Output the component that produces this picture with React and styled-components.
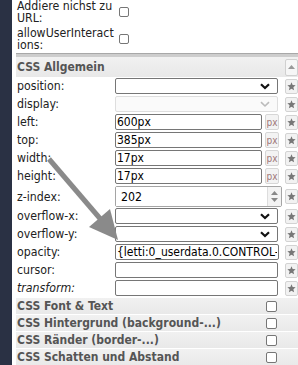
import React from 'react';
import styled, { createGlobalStyle } from 'styled-components';

const GlobalStyle = createGlobalStyle`
  html, body { margin: 0; padding: 0; background: #fff; overflow: hidden; }
  body {
    font-family: "DejaVu Sans Condensed", "DejaVu Sans", sans-serif;
    font-size: 12.25px;
    color: #222;
  }
`;

function Star() {
    return (
        <svg width="9" height="9" viewBox="0 0 10 10">
            <path d="M5 0.4 L6.3 3.4 L9.6 3.7 L7.1 5.9 L7.9 9.3 L5 7.5 L2.1 9.3 L2.9 5.9 L0.4 3.7 L3.7 3.4 Z" fill="#777" />
        </svg>
    );
}

function Chevron({ light }) {
    return (
        <svg width="10" height="7" viewBox="0 0 10 7">
            <path d="M1 1.2 L5 5 L9 1.2" fill="none" stroke={light ? '#bbb' : '#111'} strokeWidth={light ? 1.6 : 2.2} />
        </svg>
    );
}

function Select({ disabled }) {
    return (
        <SelectBox $disabled={disabled}>
            <Chevron light={disabled} />
        </SelectBox>
    );
}

function PropRow({ label, italic, children, tall }) {
    return (
        <Row $tall={tall}>
            <PropLabel $italic={italic}>{label}</PropLabel>
            <Field>{children}</Field>
            <StarButton><Star /></StarButton>
        </Row>
    );
}

function App() {
    return (
        <Page>
            <GlobalStyle />
            <Sidebar />
            <Panel>
                <OptionRow $first>
                    <OptionLabel>Addiere nichst zu URL:</OptionLabel>
                    <Check $ml={4} />
                </OptionRow>
                <OptionRow>
                    <OptionLabel>allowUserInteractions:</OptionLabel>
                    <Check $ml={4} />
                </OptionRow>
                <Divider />
                <GroupHeader>
                    <span>CSS Allgemein</span>
                    <CollapseButton>
                        <svg width="7" height="4" viewBox="0 0 7 4"><path d="M0 4 L3.5 0 L7 4 Z" fill="#999" /></svg>
                    </CollapseButton>
                </GroupHeader>
                <Rows>
                    <PropRow label="position:"><Select /></PropRow>
                    <PropRow label="display:"><Select disabled /></PropRow>
                    <PropRow label="left:"><TextInput defaultValue="600px" $w={147} /><UnitButton>px</UnitButton></PropRow>
                    <PropRow label="top:"><TextInput defaultValue="385px" $w={147} /><UnitButton>px</UnitButton></PropRow>
                    <PropRow label="width:"><TextInput defaultValue="17px" $w={147} /><UnitButton>px</UnitButton></PropRow>
                    <PropRow label="height:"><TextInput defaultValue="17px" $w={147} /><UnitButton>px</UnitButton></PropRow>
                    <PropRow label="z-index:" tall>
                        <NumberBox>
                            <NumberInput defaultValue="202" />
                            <Spinner>
                                <svg width="7" height="4" viewBox="0 0 7 4"><path d="M0 4 L3.5 0 L7 4 Z" fill="#888" /></svg>
                                <svg width="7" height="4" viewBox="0 0 7 4"><path d="M0 0 L3.5 4 L7 0 Z" fill="#888" /></svg>
                            </Spinner>
                        </NumberBox>
                    </PropRow>
                    <PropRow label="overflow-x:"><Select /></PropRow>
                    <PropRow label="overflow-y:"><Select /></PropRow>
                    <PropRow label="opacity:"><TextInput defaultValue="{letti:0_userdata.0.CONTROL-LIGHT}" $w={164} /></PropRow>
                    <PropRow label="cursor:"><TextInput defaultValue="" $w={163} /></PropRow>
                    <PropRow label="transform:" italic><TextInput defaultValue="" $w={163} /></PropRow>
                </Rows>
                <Sections>
                    <Section><span>CSS Font &amp; Text</span><Check $ml={0} $big /></Section>
                    <Section><span>CSS Hintergrund (background-...)</span><Check $ml={0} $big /></Section>
                    <Section><span>CSS Ränder (border-...)</span><Check $ml={0} $big /></Section>
                    <Section><span>CSS Schatten und Abstand</span><Check $ml={0} $big /></Section>
                </Sections>
            </Panel>
            <Overlay width="298" height="365" viewBox="0 0 298 365">
                <line x1="49" y1="159" x2="103" y2="222" stroke="#8a8a8a" strokeWidth="5" />
                <polygon points="118,240 89,227 110,209" fill="#8a8a8a" />
            </Overlay>
        </Page>
    );
}

const Page = styled.div`
  position: relative;
  display: flex;
  width: 298px;
  height: 365px;
  overflow: hidden;
`;

const Sidebar = styled.div`
  flex: none;
  width: 12px;
  background: #2a3144;
`;

const Panel = styled.div`
  flex: 1;
  min-width: 0;
  margin-left: 4px;
  display: flex;
  flex-direction: column;
`;

const OptionRow = styled.div`
  display: grid;
  grid-template-columns: 99px 1fr;
  align-items: center;
  padding: 1px 0;
  margin-top: ${p => (p.$first ? '-1px' : '1px')};
`;

const OptionLabel = styled.div`
  line-height: 12px;
  padding-left: 1px;
  overflow-wrap: anywhere;
`;

const Check = styled.span`
  display: block;
  box-sizing: border-box;
  width: ${p => (p.$big ? 11 : 10)}px;
  height: ${p => (p.$big ? 11 : 10)}px;
  margin-left: ${p => p.$ml}px;
  border: 1px solid #767676;
  border-radius: 2px;
  background: #fff;
`;

const Divider = styled.div`
  height: 3px;
  margin-top: 1px;
  border-top: 1px solid #a8a8a8;
  background: #cdcdcd;
`;

const GroupHeader = styled.div`
  display: flex;
  align-items: center;
  justify-content: space-between;
  height: 20px;
  padding-left: 1px;
  background: linear-gradient(#f1f1f1, #e8e8e8);
  font-size: 12px;
  font-weight: bold;
  color: #555;
`;

const CollapseButton = styled.div`
  box-sizing: border-box;
  display: flex;
  align-items: center;
  justify-content: center;
  width: 13px;
  height: 17px;
  border: 1px solid #d0d0d0;
  border-radius: 2px;
  background: #f6f6f6;
`;

const Rows = styled.div`
  display: flex;
  flex-direction: column;
  gap: 2px;
  margin-top: 1px;
`;

const Row = styled.div`
  display: grid;
  grid-template-columns: 99px 1fr 15px;
  align-items: center;
  height: ${p => (p.$tall ? 20 : 16)}px;
`;

const PropLabel = styled.div`
  padding-left: 1px;
  font-style: ${p => (p.$italic ? 'italic' : 'normal')};
  white-space: nowrap;
`;

const Field = styled.div`
  display: flex;
  align-items: center;
  gap: 3px;
  height: 100%;
`;

const StarButton = styled.div`
  box-sizing: border-box;
  display: flex;
  align-items: center;
  justify-content: center;
  width: 13px;
  height: 15px;
  margin-left: 2px;
  border: 1px solid #d3d3d3;
  border-radius: 2px;
  background: #f2f2f2;
`;

const SelectBox = styled.div`
  box-sizing: border-box;
  display: flex;
  align-items: center;
  justify-content: flex-end;
  width: 163px;
  height: 16px;
  padding-right: 7px;
  border: 1px solid ${p => (p.$disabled ? '#dedede' : '#767676')};
  border-radius: 2px;
  background: ${p => (p.$disabled ? '#fafafa' : '#fff')};
`;

const TextInput = styled.input`
  box-sizing: border-box;
  width: ${p => p.$w}px;
  height: 16px;
  margin: 0;
  padding: 0 1px;
  border: 1px solid #767676;
  border-radius: 2px;
  font: 12px "DejaVu Sans Condensed", "DejaVu Sans", sans-serif;
  color: #000;
  outline: none;
`;

const UnitButton = styled.div`
  box-sizing: border-box;
  display: flex;
  align-items: center;
  justify-content: center;
  width: 14px;
  height: 16px;
  border: 1px solid #d6d6d6;
  border-radius: 2px;
  background: #f3f3f3;
  font-size: 10px;
  color: #a07878;
`;

const NumberBox = styled.div`
  box-sizing: border-box;
  display: flex;
  width: 167px;
  height: 21px;
  border: 1px solid #a5a5a5;
  border-radius: 2px;
  background: #fff;
`;

const NumberInput = styled.input`
  flex: 1;
  min-width: 0;
  margin: 0;
  padding: 0 5px;
  border: none;
  font: 12.25px "DejaVu Sans Condensed", "DejaVu Sans", sans-serif;
  color: #000;
  outline: none;
`;

const Spinner = styled.div`
  display: flex;
  flex-direction: column;
  align-items: center;
  justify-content: center;
  gap: 3px;
  width: 13px;
  border-left: 1px solid #ddd;
  background: #f3f3f3;
`;

const Sections = styled.div`
  display: flex;
  flex-direction: column;
  margin-top: 1px;
`;

const Section = styled.div`
  display: flex;
  align-items: center;
  justify-content: space-between;
  height: 16px;
  padding: 0 21px 0 1px;
  border-top: 1px solid #fff;
  background: linear-gradient(#f1f1f1, #e9e9e9);
  font-size: 12px;
  font-weight: bold;
  color: #555;
  white-space: nowrap;
`;

const Overlay = styled.svg`
  position: absolute;
  left: 0;
  top: 0;
  pointer-events: none;
`;

export default App;
